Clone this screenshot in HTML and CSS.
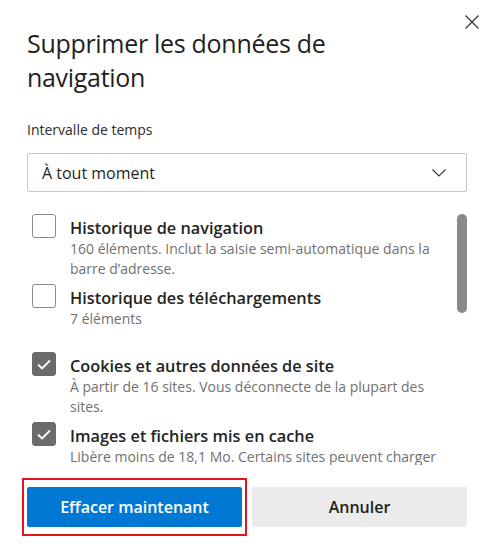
FILE: index.html
```html
<!DOCTYPE html>
<html lang="fr">
<head>
<meta charset="utf-8">
<link rel="stylesheet" href="styles.css">
</head>
<body>
<div class="dialog">
  <button class="close" aria-label="Fermer">
    <svg width="14" height="14" viewBox="0 0 14 14"><path d="M0.5 0.5 L13.5 13.5 M13.5 0.5 L0.5 13.5" stroke="#333" stroke-width="1.2" fill="none"/></svg>
  </button>
  <h1 class="title">Supprimer les données de navigation</h1>
  <div class="field-label">Intervalle de temps</div>
  <div class="select">
    <span>À tout moment</span>
    <svg class="chevron" width="14" height="8" viewBox="0 0 14 8"><path d="M0.5 0.5 L7 7 L13.5 0.5" stroke="#333" stroke-width="1.1" fill="none"/></svg>
  </div>
  <div class="list">
    <div class="items">
      <div class="item">
        <span class="box"></span>
        <div class="text">
          <div class="label">Historique de navigation</div>
          <div class="desc">160 éléments. Inclut la saisie semi-automatique dans la barre d’adresse.</div>
        </div>
      </div>
      <div class="item short">
        <span class="box"></span>
        <div class="text">
          <div class="label">Historique des téléchargements</div>
          <div class="desc">7 éléments</div>
        </div>
      </div>
      <div class="item">
        <span class="box checked"><svg width="14" height="11" viewBox="0 0 14 11"><path d="M1 5.5 L5 9.5 L13 1.5" stroke="#fff" stroke-width="1.8" fill="none"/></svg></span>
        <div class="text">
          <div class="label">Cookies et autres données de site</div>
          <div class="desc">À partir de 16 sites. Vous déconnecte de la plupart des sites.</div>
        </div>
      </div>
      <div class="item">
        <span class="box checked"><svg width="14" height="11" viewBox="0 0 14 11"><path d="M1 5.5 L5 9.5 L13 1.5" stroke="#fff" stroke-width="1.8" fill="none"/></svg></span>
        <div class="text">
          <div class="label">Images et fichiers mis en cache</div>
          <div class="desc">Libère moins de 18,1 Mo. Certains sites peuvent charger plus lentement lors de votre prochaine visite.</div>
        </div>
      </div>
    </div>
    <div class="scrollbar"></div>
  </div>
  <div class="actions">
    <button class="btn primary">Effacer maintenant</button>
    <button class="btn secondary">Annuler</button>
    <div class="highlight"></div>
  </div>
</div>
</body>
</html>
```
FILE: styles.css
```css
* { box-sizing: border-box; }
html, body {
  margin: 0;
  padding: 0;
  background: #fff;
}
body {
  font-family: "Open Sans", "Noto Sans", "Liberation Sans", sans-serif;
  color: #1b1b1b;
  width: 495px;
  height: 551px;
  overflow: hidden;
}
.dialog {
  position: relative;
  padding: 0 28px 0 27px;
}
.close {
  position: absolute;
  top: 15px;
  right: 16px;
  width: 14px;
  height: 14px;
  padding: 0;
  border: 0;
  background: none;
  display: block;
}
.close svg { display: block; }
.title {
  margin: 0;
  padding-top: 26px;
  padding-right: 120px;
  font-size: 25px;
  font-weight: 400;
  line-height: 34px;
  letter-spacing: -0.3px;
  color: #1f1f1f;
}
.field-label {
  margin-top: 26px;
  font-size: 14px;
  line-height: 20px;
  color: #2b2b2b;
}
.select {
  margin-top: 13px;
  height: 39px;
  border: 1px solid #c6c6c6;
  border-radius: 2px;
  display: flex;
  align-items: center;
  justify-content: space-between;
  padding: 0 20px 0 14px;
  font-size: 16px;
  color: #1f1f1f;
}
.chevron { display: block; }
.list {
  position: relative;
  margin-top: 22px;
  height: 251px;
  overflow: hidden;
}
.items {
  padding-left: 5px;
  padding-right: 26px;
}
.item {
  display: flex;
  gap: 14px;
  margin-bottom: 5px;
}
.item.short { min-height: 63px; }
.text { padding-top: 3px; }
.box {
  flex: none;
  width: 24px;
  height: 24px;
  border: 1px solid #8a8a8a;
  border-radius: 3px;
  display: flex;
  align-items: center;
  justify-content: center;
}
.box.checked {
  background: #6b6b6b;
  border-color: #6b6b6b;
}
.box svg { display: block; }
.label {
  font-size: 16.3px;
  font-weight: 600;
  line-height: 22px;
  color: #242424;
}
.desc {
  font-size: 14px;
  line-height: 20px;
  color: #717171;
}
.scrollbar {
  position: absolute;
  top: 0;
  right: 0;
  width: 10px;
  height: 99px;
  border-radius: 5px;
  background: #8a8a8a;
}
.actions {
  position: relative;
  margin-top: 22px;
  display: flex;
  gap: 10px;
}
.btn {
  flex: 1 1 0;
  height: 40px;
  border: 0;
  border-radius: 2px;
  font-family: inherit;
  font-size: 16px;
  font-weight: 600;
}
.primary {
  background: #0078d4;
  color: #fff;
}
.secondary {
  background: #ebebeb;
  color: #1f1f1f;
}
.highlight {
  position: absolute;
  left: -5px;
  top: -9px;
  width: 225px;
  height: 58px;
  border: 2px solid #e4141c;
  pointer-events: none;
}
```
